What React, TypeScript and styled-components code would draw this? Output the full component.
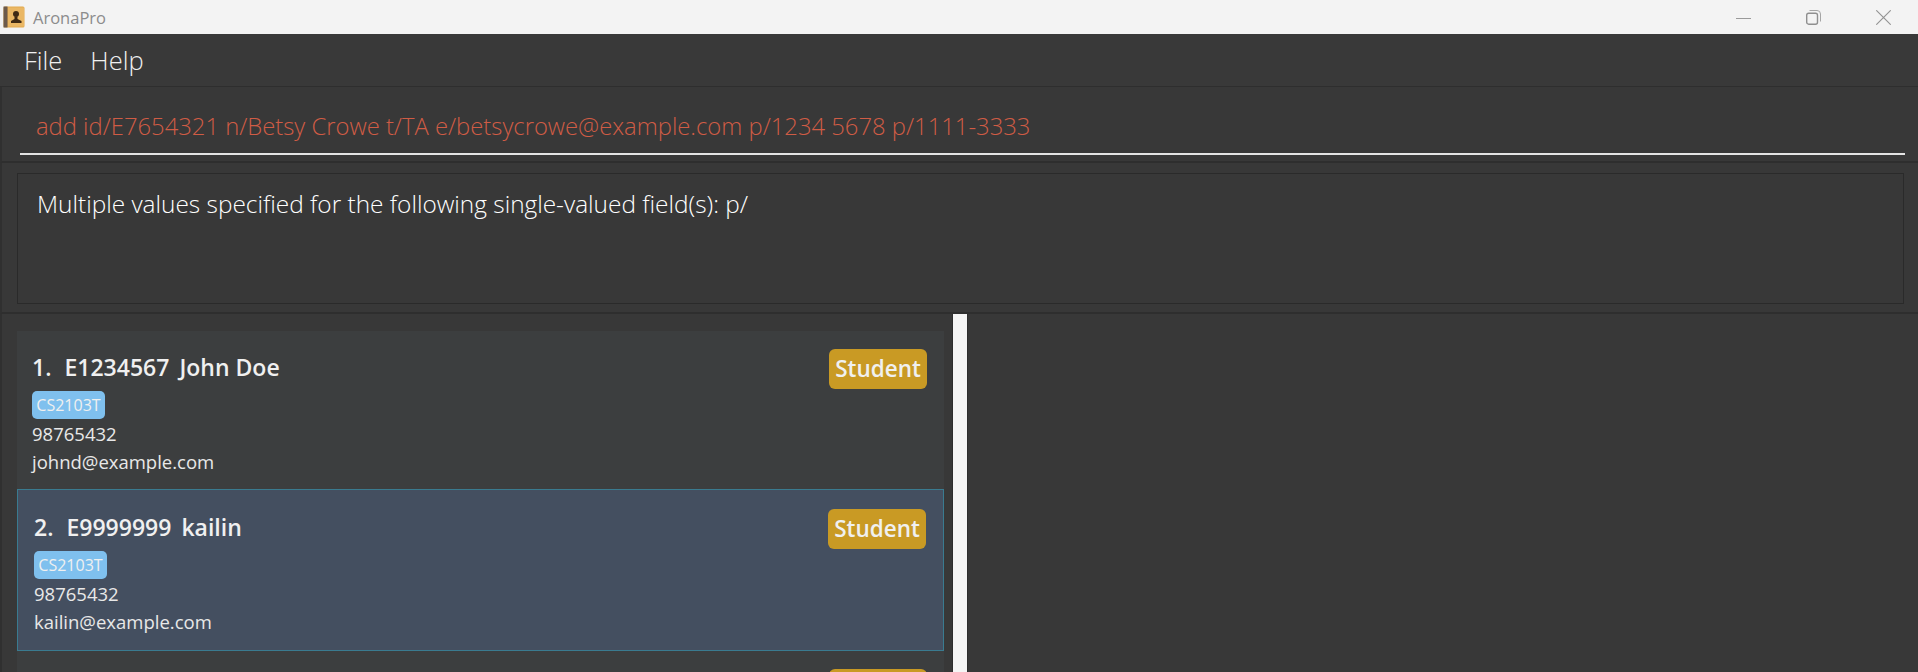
import React from "react";
import styled, { createGlobalStyle } from "styled-components";

interface Person {
  index: number;
  id: string;
  name: string;
  tag: string;
  phone: string;
  email: string;
  selected?: boolean;
}

const people: Person[] = [
  { index: 1, id: "E1234567", name: "John Doe", tag: "CS2103T", phone: "98765432", email: "johnd@example.com" },
  { index: 2, id: "E9999999", name: "kailin", tag: "CS2103T", phone: "98765432", email: "kailin@example.com", selected: true },
];

const App: React.FC = () => {
  return (
    <Window>
      <GlobalStyle />
      <TitleBar>
        <TitleLeft>
          <svg width="22" height="22" viewBox="0 0 22 22">
            <rect x="0.5" y="0.5" width="21" height="21" rx="1.5" fill="#e2a94e" />
            <rect x="0.5" y="0.5" width="4" height="21" fill="#6b5a4c" />
            <rect x="5" y="1.5" width="16" height="19" fill="#eab764" />
            <circle cx="13" cy="8" r="3" fill="#3f2a14" />
            <path d="M11.5 10.5h3v2.5l4 2V17H8v-2l3.5-2z" fill="#3f2a14" />
          </svg>
          <AppName>AronaPro</AppName>
        </TitleLeft>
        <WindowControls>
          <svg width="15" height="15" viewBox="0 0 15 15">
            <path d="M0 8.5h15" stroke="#9a9a9a" strokeWidth="1" fill="none" />
          </svg>
          <svg width="15" height="15" viewBox="0 0 15 15">
            <rect x="0.7" y="3.2" width="10.8" height="11" rx="2" stroke="#8f8f8f" strokeWidth="1.4" fill="none" />
            <path d="M3.5 0.5h7.5a3.5 3.5 0 0 1 3.5 3.5v7.5" stroke="#a5a5a5" strokeWidth="1" fill="none" />
          </svg>
          <svg width="15" height="15" viewBox="0 0 15 15">
            <path d="M0.3 0.3l14.4 14.4M14.7 0.3l-14.4 14.4" stroke="#929292" strokeWidth="1.1" fill="none" />
          </svg>
        </WindowControls>
      </TitleBar>

      <MenuBar>
        <MenuItem>File</MenuItem>
        <MenuItem>Help</MenuItem>
      </MenuBar>

      <CommandPane>
        <CommandText>add id/E7654321 n/Betsy Crowe t/TA e/betsycrowe@example.com p/1234 5678 p/1111-3333</CommandText>
      </CommandPane>

      <ResultPane>
        <ResultBox>Multiple values specified for the following single-valued field(s): p/</ResultBox>
      </ResultPane>

      <Main>
        <ListPane>
          <CardList>
            {people.map((p) => (
              <Card key={p.index} $selected={p.selected}>
                <CardHead>
                  <CardTitle>
                    <CardIndex>{p.index}. </CardIndex>
                    <span>{p.id}</span>
                    <span>{p.name}</span>
                  </CardTitle>
                  <RoleBadge>Student</RoleBadge>
                </CardHead>
                <Tag>{p.tag}</Tag>
                <Detail>{p.phone}</Detail>
                <Detail>{p.email}</Detail>
              </Card>
            ))}
            <Card>
              <CardHead>
                <CardTitle />
                <RoleBadge>Student</RoleBadge>
              </CardHead>
            </Card>
          </CardList>
        </ListPane>
        <Scrollbar />
        <DetailPane />
      </Main>
    </Window>
  );
};

export default App;

const GlobalStyle = createGlobalStyle`
  html, body {
    margin: 0;
    padding: 0;
    background: #383838;
  }
  * {
    box-sizing: border-box;
  }
`;

const Window = styled.div`
  width: 1918px;
  height: 672px;
  display: flex;
  flex-direction: column;
  overflow: hidden;
  background: #383838;
  font-family: "Open Sans", "Noto Sans", sans-serif;
`;

const TitleBar = styled.div`
  height: 34px;
  flex: none;
  display: flex;
  align-items: center;
  justify-content: space-between;
  background: #f3f3f3;
`;

const TitleLeft = styled.div`
  display: flex;
  align-items: center;
  gap: 8px;
  padding-left: 3px;
`;

const AppName = styled.div`
  font-size: 16.5px;
  color: #8c8c8c;
`;

const WindowControls = styled.div`
  display: flex;
  gap: 55px;
  padding-right: 27px;
  align-items: center;
`;

const MenuBar = styled.div`
  height: 53px;
  flex: none;
  display: flex;
  align-items: center;
  gap: 28px;
  padding: 0 24px 1px;
  background: #393939;
  border-bottom: 1px solid #2e2e2e;
`;

const MenuItem = styled.div`
  font-size: 25.5px;
  font-weight: 300;
  color: #f0f0f0;
`;

const CommandPane = styled.div`
  height: 76px;
  flex: none;
  padding: 13px 13px 6px 18px;
  background: #383838;
  border-left: 2px solid #303030;
  border-bottom: 2px solid #2e2e2e;
`;

const CommandText = styled.div`
  height: 100%;
  padding: 0 0 2px 16px;
  display: flex;
  align-items: center;
  font-size: 23.8px;
  font-weight: 300;
  color: #d05c45;
  border-bottom: 2px solid #e4e4e4;
`;

const ResultPane = styled.div`
  height: 151px;
  flex: none;
  padding: 10px 14px 8px 15px;
  background: #383838;
  border-left: 2px solid #303030;
  border-bottom: 2px solid #2e2e2e;
`;

const ResultBox = styled.div`
  height: 100%;
  padding: 13px 19px;
  font-size: 24.4px;
  font-weight: 300;
  color: #ffffff;
  background: #383838;
  border: 1px solid #2a2a2a;
`;

const Main = styled.div`
  flex: 1;
  min-height: 0;
  display: flex;
`;

const ListPane = styled.div`
  width: 953px;
  flex: none;
  padding: 17px 8px 0 15px;
  border-left: 2px solid #303030;
  border-right: 1px solid #2e2e2e;
`;

const CardList = styled.div`
  display: flex;
  flex-direction: column;
`;

const Card = styled.div<{ $selected?: boolean }>`
  height: ${(p) => (p.$selected ? "162px" : "158px")};
  padding: ${(p) => (p.$selected ? "19px 17px 0 16px" : "17px 16px 0 14px")};
  background: ${(p) => (p.$selected ? "#444f60" : "#3c3e3f")};
  border: 1px solid ${(p) => (p.$selected ? "#3a7b90" : "transparent")};
`;

const CardHead = styled.div`
  height: 40px;
  display: flex;
  align-items: center;
  justify-content: space-between;
`;

const CardTitle = styled.div`
  display: flex;
  gap: 10px;
  padding-bottom: 4px;
  font-size: 23px;
  font-weight: 600;
  color: #f0f0f0;
`;

const CardIndex = styled.span`
  margin-right: 3px;
`;

const RoleBadge = styled.div`
  width: 98px;
  height: 40px;
  padding-bottom: 2px;
  display: flex;
  align-items: center;
  justify-content: center;
  font-size: 22.5px;
  font-weight: 600;
  color: #f0f0f0;
  background: #c99a24;
  border-radius: 6px;
`;

const Tag = styled.div`
  display: flex;
  width: 73px;
  height: 28px;
  margin-top: 2px;
  align-items: center;
  justify-content: center;
  font-size: 16px;
  font-weight: 500;
  color: #f0f0f0;
  background: #7fc0ee;
  border-radius: 5px;
`;

const Detail = styled.div`
  height: 28.5px;
  display: flex;
  align-items: center;
  font-size: 18.5px;
  font-weight: 400;
  color: #e8e8e8;
`;

const Scrollbar = styled.div`
  width: 14px;
  flex: none;
  background: #f5f5f5;
`;

const DetailPane = styled.div`
  flex: 1;
  background: #383838;
  border-left: 1px solid #2e2e2e;
`;
